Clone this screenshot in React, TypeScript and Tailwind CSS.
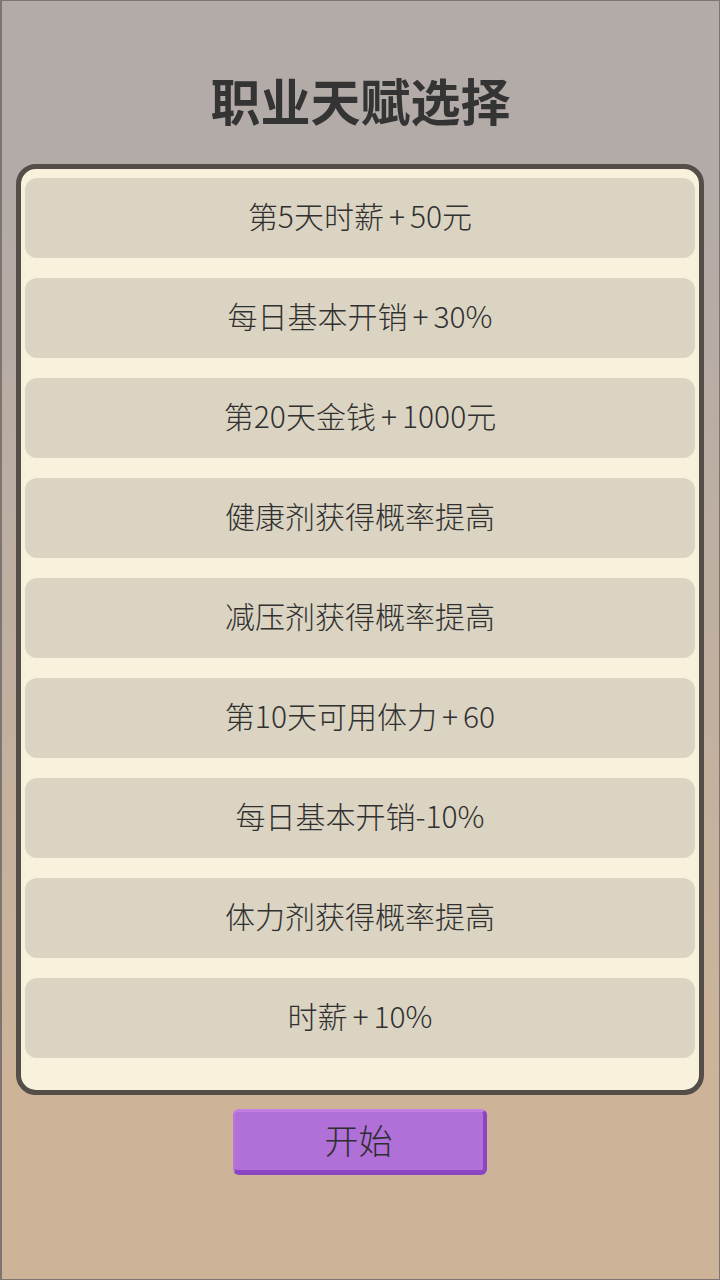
const talents = [
  "第5天时薪+50元",
  "每日基本开销+30%",
  "第20天金钱+1000元",
  "健康剂获得概率提高",
  "减压剂获得概率提高",
  "第10天可用体力+60",
  "每日基本开销-10%",
  "体力剂获得概率提高",
  "时薪+10%",
]

// the "+" in the game's font sits with more room around it
function Label({ text }: { text: string }) {
  const parts = text.split("+")
  return (
    <>
      {parts.map((p, i) => (
        <span key={i}>
          {i > 0 && <span className="mx-[5px]">+</span>}
          {p}
        </span>
      ))}
    </>
  )
}

export default function App() {
  return (
    <div
      className="w-[720px] h-[1280px] flex flex-col items-center border-t border-l-2 border-r border-b border-[#7d7570] bg-gradient-to-b from-[#b3aba7] from-15% to-[#cdb499] to-85% text-[#303030]"
      style={{ fontFamily: '"Noto Sans CJK SC", "Noto Sans", sans-serif' }}
    >
      <h1 className="mt-[69px] mb-[4px] text-[50px] leading-[58px] font-bold text-[#343434]">职业天赋选择</h1>

      <div className="mt-[32px] w-[688px] self-start ml-[14px] rounded-[20px] border-[5px] border-[#554d47] bg-[#f8f2dc] pt-[9px] pb-[32px] px-[4px] flex flex-col gap-[20px]">
        {talents.map((t) => (
          <div
            key={t}
            className="h-[80px] pb-[6px] rounded-[12px] bg-[#dbd4c2] flex items-center justify-center text-[30px] font-light"
          >
            <Label text={t} />
          </div>
        ))}
      </div>

      <button className="mt-[14px] -ml-[2px] w-[254px] h-[66px] pb-[4px] rounded-[6px] bg-[#b070d8] border-t-[3px] border-t-[#c47ee2] border-l-[2px] border-l-[#b878dc] border-r-[4px] border-r-[#8a45c2] border-b-[5px] border-b-[#8a45c2] flex items-center justify-center text-[34px] font-light text-[#2e2e2e]">
        开始
      </button>
    </div>
  )
}
